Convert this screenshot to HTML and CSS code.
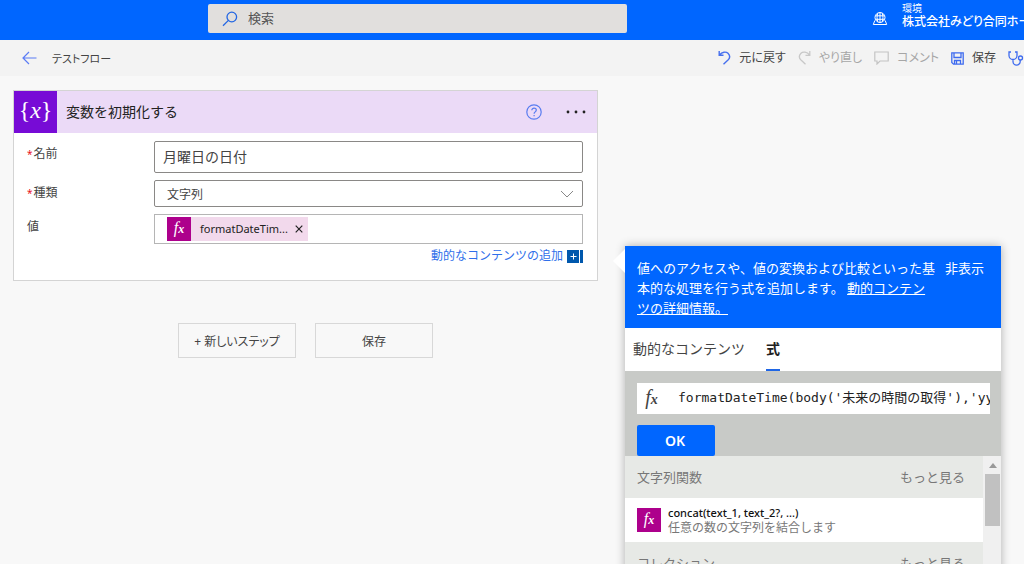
FILE: index.html
```html
<!DOCTYPE html>
<html lang="ja">
<head>
<meta charset="utf-8">
<meta name="viewport" content="width=device-width, initial-scale=1">
<title>テストフロー</title>
<link rel="stylesheet" href="styles.css">
</head>
<body>
<header class="topbar">
  <label class="search">
    <svg width="16" height="16" viewBox="0 0 16 16" fill="none" stroke="#2266e3" stroke-width="1.3" aria-hidden="true"><circle cx="9.8" cy="6" r="4.8"/><path d="M6.4 9.4 1 14.8"/></svg>
    <input class="search-input" type="text" placeholder="検索" aria-label="検索">
  </label>
  <div class="environment">
    <svg width="16" height="16" viewBox="0 0 16 16" fill="none" stroke="#fff" stroke-width="1" aria-hidden="true"><circle cx="8" cy="6.5" r="5"/><path d="M8 1.500v10M5.800 2.200c-1 2.500-1 6 0 8.600M10.200 2.200c1 2.500 1 6 0 8.600M3.300 4.800h9.400M3.300 8.300h9.400M2.800 9.500 1.300 13.500h13.400l-1.500-4"/></svg>
    <div class="environment-text">
      <span class="environment-label">環境</span>
      <span class="environment-name">株式会社みどり合同ホールディングス</span>
    </div>
  </div>
</header>

<nav class="toolbar">
  <button class="back" type="button" aria-label="戻る"><svg width="15" height="14" viewBox="0 0 15 14" fill="none" stroke="#5b7cf5" stroke-width="1.2"><path d="M7 1 1 7l6 6M1 7h13.5"/></svg></button>
  <h1 class="flow-name">テストフロー</h1>
  <div class="commands">
    <button class="command" type="button"><svg width="13" height="16" viewBox="0 0 13 16" fill="none" stroke="#4770ee" stroke-width="1.4"><path d="M1.200 1v4.300h4.300M1.500 5C4 1.800 8 1.300 10 3.300s2 4.700 0 6.700L5.500 14.300"/></svg>元に戻す</button>
    <button class="command" type="button" disabled><svg width="13" height="16" viewBox="0 0 13 16" fill="none" stroke="#c8c8c8" stroke-width="1.3"><path d="M11.800 1v4.300H7.500M11.500 5C9 1.800 5 1.300 3 3.300s-2 4.700 0 6.700l4.500 4.300"/></svg>やり直し</button>
    <button class="command" type="button" disabled><svg width="15" height="14" viewBox="0 0 15 14" fill="none" stroke="#c4c4c4" stroke-width="1.2"><path d="M.8 1h13.400v9H6l-3 3v-3H.8z"/></svg>コメント</button>
    <button class="command" type="button"><svg width="13" height="13" viewBox="0 0 13 13" fill="none" stroke="#3e6bef" stroke-width="1.300"><path d="M.8.8h11.400v11.400H2.500L.8 10.500zM3 1v4.500h7V1M3.500 12V8.500h6V12M5.500 9v3"/></svg>保存</button>
    <button class="command" type="button" aria-label="フロー チェッカー"><svg width="18" height="15" viewBox="0 0 18 15" fill="none" stroke="#3e6bef" stroke-width="1.300"><path d="M3 1H1v3.500a4 4 0 0 0 8 0V1H7M5 8.500V10.500a3.600 3.600 0 0 0 7.200 0V9"/><circle cx="12.500" cy="7" r="2"/></svg></button>
  </div>
</nav>

<main class="designer">
  <div class="flow">
    <section class="card">
      <header class="card-header">
        <span class="card-icon" aria-hidden="true">{<i>x</i>}</span>
        <h2 class="card-title">変数を初期化する</h2>
        <button class="icon-button" type="button" aria-label="ヘルプ"><svg width="16" height="16" viewBox="0 0 16 16" fill="none" stroke="#587cf0" stroke-width="1.200"><circle cx="8" cy="8" r="7.200"/><path d="M5.800 6.300c0-3 4.500-2.800 4.500-.2 0 1.800-2.200 1.700-2.200 3.600M8.100 11v1.300"/></svg></button>
        <button class="icon-button" type="button" aria-label="その他"><svg width="20" height="4" viewBox="0 0 20 4" fill="#222"><circle cx="2" cy="2" r="1.400"/><circle cx="10" cy="2" r="1.400"/><circle cx="18" cy="2" r="1.400"/></svg></button>
      </header>
      <form class="fields">
        <label class="field-label" for="name"><span class="required">*</span>名前</label>
        <input class="box name-box" id="name" type="text" value="月曜日の日付">
        <label class="field-label" for="kind"><span class="required">*</span>種類</label>
        <select class="box kind-box" id="kind"><option>文字列</option></select>
        <span class="field-label" id="value-label">値</span>
        <div class="box value-box" role="group" aria-labelledby="value-label">
          <span class="token">
            <span class="fx fx-tile">f<span class="fx-sub">x</span></span>
            <span class="token-text">formatDateTim...</span>
            <button class="token-remove" type="button" aria-label="削除"><svg width="8" height="8" viewBox="0 0 8 8" stroke="#222" stroke-width="1.200"><path d="m.7.7 6.600 6.600M7.300.7.7 7.300"/></svg></button>
          </span>
        </div>
        <a class="add-dynamic" href="#panel">動的なコンテンツの追加<svg width="16" height="13" viewBox="0 0 16 13" aria-hidden="true"><path fill="#0058ad" d="M0 0h12v13H0zM13 0h3v13h-3z"/><path d="M3.500 6.500h6M6.500 3.500v6" stroke="#fff"/></svg></a>
      </form>
    </section>
    <div class="actions">
      <button class="action" type="button">+ 新しいステップ</button>
      <button class="action" type="button">保存</button>
    </div>
  </div>

  <aside class="panel" id="panel">
    <div class="panel-intro">
      <p class="intro-text">値へのアクセスや、値の変換および比較といった基本的な処理を行う式を追加します。 <a class="intro-link" href="#details">動的コンテンツの詳細情報。</a></p>
      <button class="hide" type="button">非表示</button>
    </div>
    <div class="tabs" role="tablist">
      <button class="tab" type="button" role="tab" aria-selected="false">動的なコンテンツ</button>
      <button class="tab tab-active" type="button" role="tab" aria-selected="true">式</button>
    </div>
    <div class="expression">
      <label class="formula">
        <span class="fx fx-plain">f<span class="fx-sub">x</span></span>
        <input class="formula-input" type="text" aria-label="式" value="formatDateTime(body('未来の時間の取得'),'yy">
      </label>
      <button class="ok" type="button">OK</button>
    </div>
    <div class="results">
      <div class="function-list">
        <div class="group"><span>文字列関数</span><a class="more" href="#string">もっと見る</a></div>
        <div class="function">
          <span class="fx fx-tile">f<span class="fx-sub">x</span></span>
          <div class="function-text">
            <span class="function-name">concat(text_1, text_2?, ...)</span>
            <span class="function-note">任意の数の文字列を結合します</span>
          </div>
        </div>
        <div class="group"><span>コレクション</span><a class="more" href="#collection">もっと見る</a></div>
      </div>
      <div class="scrollbar" aria-hidden="true"><span class="scroll-up"></span><span class="scroll-thumb"></span></div>
    </div>
  </aside>
</main>
</body>
</html>
```

FILE: styles.css
```css
* { box-sizing: border-box; }

body {
  margin: 0;
  height: 100vh;
  overflow: hidden;
  display: flex;
  flex-direction: column;
  background: #f8f8f8;
  color: #444;
  font: 13px/20px "Noto Sans", "Noto Sans CJK JP", sans-serif;
}

button, input, select { font: inherit; color: inherit; }
button { margin: 0; padding: 0; border: 0; background: none; }
h1, h2, p { margin: 0; font-weight: 400; }
svg { flex: none; display: block; }

/* Top bar */
.topbar {
  flex: none;
  height: 40px;
  display: grid;
  grid-template-columns: minmax(0, 208fr) minmax(0, 419fr) minmax(0, 245fr) minmax(0, 152fr);
  background: #0066ff;
}
.search {
  grid-column: 2;
  height: 29px;
  margin-top: 4px;
  padding: 0 14px;
  display: flex;
  align-items: center;
  gap: 10px;
  border-radius: 2px;
  background: #e1dfdd;
}
.search-input {
  flex: 1;
  min-width: 0;
  padding: 0 0 2px;
  border: 0;
  outline: 0;
  background: none;
}
.search-input::placeholder { color: #555; opacity: 1; }
.environment {
  grid-column: 4;
  display: flex;
  align-items: center;
  gap: 14px;
  overflow: hidden;
  color: #fff;
}
.environment svg { margin-bottom: 2px; }
.environment-text {
  display: flex;
  flex-direction: column;
  align-self: flex-start;
  padding-top: 2px;
  white-space: nowrap;
}
.environment-label { font-size: 10px; line-height: 12px; }
.environment-name {
  font-size: 12px;
  font-weight: 500;
  line-height: 16px;
  font-feature-settings: "palt";
}

/* Command bar */
.toolbar {
  flex: none;
  height: 36px;
  padding-left: 22px;
  display: flex;
  align-items: center;
  overflow: hidden;
  background: #f3f3f3;
  font-size: 12px;
  font-feature-settings: "palt";
}
.flow-name { margin-left: 15px; padding-top: 1px; font-size: 11px; }
.commands {
  flex: none;
  margin: 0 -2px 0 auto;
  display: flex;
  gap: 12px;
}
.command {
  display: flex;
  align-items: center;
  gap: 8px;
  white-space: nowrap;
}
.command:disabled { color: #a6a6a6; }

/* Canvas */
.designer {
  flex: 1;
  min-height: 0;
  padding: 14px 23px 0 13px;
  display: grid;
  grid-template-columns: minmax(0, 585fr) minmax(0, 376fr);
  column-gap: 27px;
  align-items: start;
}
.card { border: 1px solid #d4d4d4; background: #fff; }
.card-header {
  height: 42px;
  padding-right: 11px;
  display: flex;
  align-items: center;
  background: #ebdaf7;
}
.card-icon {
  width: 43px;
  height: 42px;
  display: flex;
  align-items: baseline;
  justify-content: center;
  background: #770bd6;
  color: #fff;
  font: 24px/39px "Liberation Serif", serif;
}
.card-title {
  flex: 1;
  margin-left: 9px;
  font-size: 14px;
  color: #222;
}
.icon-button { margin-left: 24px; }

.fields {
  padding: 8px 14px 14px 13px;
  display: grid;
  grid-template-columns: 127px minmax(0, 1fr);
  row-gap: 7px;
}
.field-label { padding-top: 3px; font-size: 12px; }
.required { margin-right: 1px; color: #e81123; font-size: 10px; }
.box {
  width: 100%;
  border: 1px solid #8a8886;
  border-radius: 2px;
  background-color: #fff;
}
.name-box { height: 32px; padding: 0 8px 2px; font-size: 14px; }
.kind-box {
  height: 27px;
  padding: 2px 12px 0;
  appearance: none;
  font-size: 12px;
  background-image: url("data:image/svg+xml,%3Csvg xmlns='http://www.w3.org/2000/svg' width='14' height='8' fill='none' stroke='%23888'%3E%3Cpath d='m1 1 6 6 6-6'/%3E%3C/svg%3E");
  background-repeat: no-repeat;
  background-position: right 8px center;
}
.value-box {
  height: 30px;
  padding: 2px 12px;
  border-color: #b5b5b5;
  border-radius: 0;
}
.token {
  width: 141px;
  height: 24px;
  display: flex;
  align-items: center;
  background: #f2d9ec;
  color: #222;
  font-size: 11px;
}
.token-text { flex: 1; margin-left: 9px; }
.token-remove { margin-right: 5px; }
.add-dynamic {
  grid-column: 2;
  justify-self: end;
  margin-top: -5px;
  display: flex;
  align-items: center;
  gap: 4px;
  color: #2f6fea;
  font-size: 12px;
  text-decoration: none;
}

.fx {
  flex: none;
  display: flex;
  align-items: baseline;
  justify-content: center;
  font-family: "Liberation Serif", serif;
  font-style: italic;
}
.fx-tile {
  width: 24px;
  height: 24px;
  background: #ad008c;
  color: #fff;
  font-size: 16px;
  line-height: 22px;
}
.fx-sub { font-size: 12px; font-weight: 700; }
.fx-plain { width: 29px; font-size: 20px; line-height: 28px; }
.fx-plain .fx-sub { font-size: 14px; }

.actions {
  margin-top: 42px;
  display: flex;
  justify-content: center;
  gap: 19px;
}
.action {
  width: 118px;
  height: 35px;
  padding-top: 2px;
  border: 1px solid #d8d8d8;
  font-size: 12px;
  font-feature-settings: "palt";
}

/* Expression panel */
.panel {
  position: relative;
  margin-top: 156px;
  background: #fff;
  box-shadow: 0 0 9px rgba(0, 0, 0, .3);
}
.panel::before {
  content: "";
  position: absolute;
  top: 3px;
  left: -12px;
  border: 12px solid transparent;
  border-left: 0;
  border-right-color: #fff;
}
.panel-intro {
  min-height: 82px;
  padding: 12px 17px 10px 12px;
  display: flex;
  align-items: flex-start;
  justify-content: space-between;
  background: #0066ff;
  color: #fff;
}
.intro-text { max-width: 300px; }
.intro-link { color: inherit; }
.hide { flex: none; }
.tabs {
  height: 43px;
  padding: 0 8px;
  display: flex;
  gap: 21px;
  font-size: 14px;
}
.tab { border-bottom: 2px solid transparent; }
.tab-active { border-bottom-color: #1f66e5; color: #222; font-weight: 700; }
.expression {
  padding: 12px 11px 0 12px;
  background: #c8cac7;
}
.formula {
  height: 31px;
  display: flex;
  align-items: center;
  background: #fff;
}
.formula-input {
  flex: 1;
  min-width: 0;
  margin-left: 12px;
  padding: 0 0 2px;
  border: 0;
  outline: 0;
  background: none;
  color: #222;
  font-family: "DejaVu Sans Mono", "Noto Sans CJK JP", monospace;
}
.ok {
  width: 78px;
  height: 31px;
  margin-top: 11px;
  padding-right: 2px;
  display: block;
  border-radius: 2px;
  background: #0066ff;
  color: #fff;
  font-size: 14px;
  font-weight: 600;
}
.results { display: flex; }
.function-list { flex: 1; min-width: 0; }
.group {
  height: 42px;
  padding: 0 18px 0 12px;
  display: flex;
  align-items: center;
  justify-content: space-between;
  background: #e7e9e6;
  color: #777;
}
.more { color: inherit; text-decoration: none; }
.function {
  height: 44px;
  padding: 0 12px;
  display: flex;
  align-items: center;
  gap: 7px;
}
.function-text { display: flex; flex-direction: column; line-height: 15px; }
.function-name { color: #111; font-size: 11px; font-weight: 500; }
.function-note { color: #777; font-size: 12px; }
.scrollbar {
  width: 18px;
  padding: 7px 1px 0 2px;
  display: flex;
  flex-direction: column;
  align-items: center;
  gap: 6px;
  background: #f0f0f0;
}
.scroll-up {
  border: 4px solid transparent;
  border-top: 0;
  border-bottom: 5px solid #999;
}
.scroll-thumb { width: 15px; height: 52px; background: #c1c1c1; }
```
